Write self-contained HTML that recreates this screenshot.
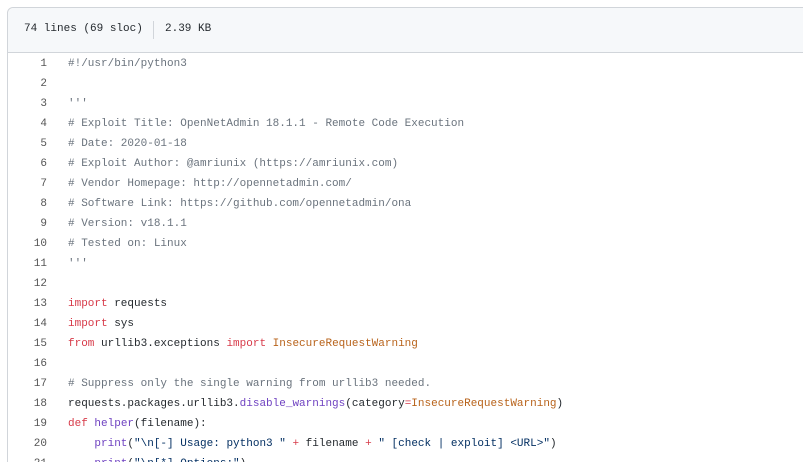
<!DOCTYPE html>
<html><head><meta charset="utf-8"><style>
html,body{margin:0;padding:0;background:#fff;width:803px;height:462px;overflow:hidden;position:relative}
.card{position:absolute;left:7px;top:7px;width:820px;height:470px;border:1px solid #d1d5da;border-radius:6px 0 0 0;}
.hdr{height:44px;background:#f6f8fa;border-bottom:1px solid #d1d5da;border-radius:6px 0 0 0;font:11px "Liberation Mono",monospace;color:#24292e;position:relative}
.hdr span{position:absolute;top:15px}
.sep{position:absolute;left:145px;top:13px;width:1px;height:18px;background:#d1d5da}
.code{position:absolute;left:0;top:54px;width:803px;height:408px;overflow:hidden;font:11px/20px "Liberation Mono",monospace;color:#24292e;white-space:pre}
.ln{position:absolute;left:0;width:47px;text-align:right;color:#555}
.tx{position:absolute;left:68px}
.c{color:#6a737d}.k{color:#d73a49}.e{color:#b8631b}.f{color:#6f42c1}.s{color:#032f62}
</style></head><body>
<div class="card"><div class="hdr"><span style="left:16px">74 lines (69 sloc)</span><div class="sep"></div><span style="left:157px">2.39 KB</span></div></div>
<div class="code">
<div class="ln" style="top:0">1</div><div class="tx c" style="top:0">#!/usr/bin/python3</div>
<div class="ln" style="top:20px">2</div>
<div class="ln" style="top:40px">3</div><div class="tx c" style="top:40px">'''</div>
<div class="ln" style="top:60px">4</div><div class="tx c" style="top:60px"># Exploit Title: OpenNetAdmin 18.1.1 - Remote Code Execution</div>
<div class="ln" style="top:80px">5</div><div class="tx c" style="top:80px"># Date: 2020-01-18</div>
<div class="ln" style="top:100px">6</div><div class="tx c" style="top:100px"># Exploit Author: @amriunix (https://amriunix.com)</div>
<div class="ln" style="top:120px">7</div><div class="tx c" style="top:120px"># Vendor Homepage: http://opennetadmin.com/</div>
<div class="ln" style="top:140px">8</div><div class="tx c" style="top:140px"># Software Link: https://github.com/opennetadmin/ona</div>
<div class="ln" style="top:160px">9</div><div class="tx c" style="top:160px"># Version: v18.1.1</div>
<div class="ln" style="top:180px">10</div><div class="tx c" style="top:180px"># Tested on: Linux</div>
<div class="ln" style="top:200px">11</div><div class="tx c" style="top:200px">'''</div>
<div class="ln" style="top:220px">12</div>
<div class="ln" style="top:240px">13</div><div class="tx" style="top:240px"><span class="k">import</span> requests</div>
<div class="ln" style="top:260px">14</div><div class="tx" style="top:260px"><span class="k">import</span> sys</div>
<div class="ln" style="top:280px">15</div><div class="tx" style="top:280px"><span class="k">from</span> urllib3.exceptions <span class="k">import</span> <span class="e">InsecureRequestWarning</span></div>
<div class="ln" style="top:300px">16</div>
<div class="ln" style="top:320px">17</div><div class="tx c" style="top:320px"># Suppress only the single warning from urllib3 needed.</div>
<div class="ln" style="top:340px">18</div><div class="tx" style="top:340px">requests.packages.urllib3.<span class="f">disable_warnings</span>(category<span class="k">=</span><span class="e">InsecureRequestWarning</span>)</div>
<div class="ln" style="top:360px">19</div><div class="tx" style="top:360px"><span class="k">def</span> <span class="f">helper</span>(filename):</div>
<div class="ln" style="top:380px">20</div><div class="tx" style="top:380px">    <span class="f">print</span>(<span class="s">"\n[-] Usage: python3 "</span> <span class="k">+</span> filename <span class="k">+</span> <span class="s">" [check | exploit] &lt;URL&gt;"</span>)</div>
<div class="ln" style="top:400px">21</div><div class="tx" style="top:400px">    <span class="f">print</span>(<span class="s">"\n[*] Options:"</span>)</div>
</div>
</body></html>
